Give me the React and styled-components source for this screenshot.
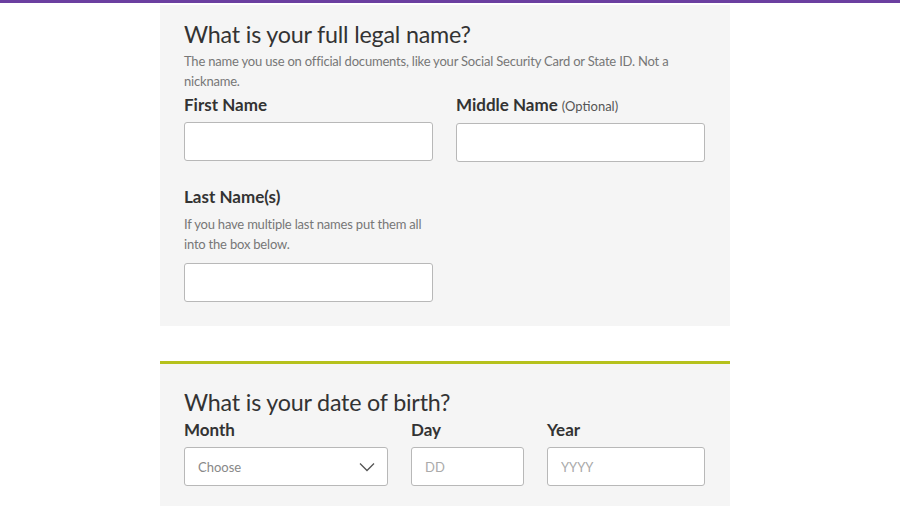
import styled, { createGlobalStyle } from "styled-components";

const Global = createGlobalStyle`
  html, body {
    margin: 0;
    padding: 0;
    background: #ffffff;
  }
  body {
    font-family: "Lato", "Liberation Sans", sans-serif;
    color: #333333;
  }
`;

const Page = styled.div`
  min-height: 506px;
  border-top: 3px solid #6b3fa0;
  padding-right: 10px;
  display: flex;
  flex-direction: column;
  align-items: center;
`;

const Section = styled.section`
  width: 570px;
  box-sizing: border-box;
  background: #f5f5f5;
  padding: ${(p) => (p.$accent ? "22px 25px 20px 24px" : "13px 25px 24px 24px")};
  border-top: ${(p) => (p.$accent ? "3px solid #b5c11c" : "none")};
  margin-top: ${(p) => (p.$accent ? "35px" : "2px")};
  display: flex;
  flex-direction: column;
`;

const Heading = styled.h2`
  margin: 0;
  font-size: 23.3px;
  line-height: 32px;
  font-weight: 400;
  color: #333333;
  letter-spacing: -0.2px;
`;

const Hint = styled.p`
  margin: ${(p) => p.$margin || "0"};
  font-size: 13px;
  line-height: 20px;
  color: #777777;
  letter-spacing: -0.2px;
`;

const Row = styled.div`
  display: grid;
  grid-template-columns: ${(p) => p.$cols};
  column-gap: 23px;
  margin-top: ${(p) => p.$mt || "0"};
`;

const Field = styled.div`
  display: flex;
  flex-direction: column;
`;

const Label = styled.label`
  font-size: 17px;
  line-height: 24px;
  font-weight: 700;
  color: #333333;
  margin-bottom: 5px;
`;

const Optional = styled.span`
  font-size: 13px;
  font-weight: 400;
  color: #555555;
  margin-left: 4px;
`;

const Input = styled.input`
  box-sizing: border-box;
  width: 100%;
  height: 39px;
  border: 1px solid #b8b8b8;
  border-radius: 3px;
  background: #ffffff;
  padding: 0 13px;
  font-family: "Lato", "Liberation Sans", sans-serif;
  font-size: 13px;
  color: #333333;

  &::placeholder {
    color: #aaaaaa;
  }
`;

const SelectBox = styled.div`
  box-sizing: border-box;
  height: 39px;
  border: 1px solid #b8b8b8;
  border-radius: 3px;
  background: #ffffff;
  padding: 0 12px 0 13px;
  display: flex;
  align-items: center;
  justify-content: space-between;
  font-size: 13px;
  color: #888888;
`;

const Chevron = () => (
  <svg width="16" height="10" viewBox="0 0 16 10" aria-hidden="true">
    <path d="M1 1.5 L8 8.5 L15 1.5" fill="none" stroke="#555" strokeWidth="1.3" />
  </svg>
);

export default function App() {
  return (
    <>
      <Global />
      <Page>
        <Section>
          <Heading>What is your full legal name?</Heading>
          <Hint $margin="1px 0 0">
            The name you use on official documents, like your Social Security Card or State ID. Not a
            nickname.
          </Hint>
          <Row $cols="1fr 1fr" $mt="2px">
            <Field>
              <Label>First Name</Label>
              <Input type="text" />
            </Field>
            <Field>
              <Label>
                Middle Name<Optional>(Optional)</Optional>
              </Label>
              <Input type="text" />
            </Field>
          </Row>
          <Row $cols="1fr 1fr" $mt="23px">
            <Field>
              <Label>Last Name(s)</Label>
              <Hint $margin="0 0 9px">
                If you have multiple last names put them all into the box below.
              </Hint>
              <Input type="text" />
            </Field>
          </Row>
        </Section>

        <Section $accent>
          <Heading>What is your date of birth?</Heading>
          <Row $cols="204px 113px 1fr">
            <Field>
              <Label>Month</Label>
              <SelectBox>
                Choose
                <Chevron />
              </SelectBox>
            </Field>
            <Field>
              <Label>Day</Label>
              <Input type="text" placeholder="DD" />
            </Field>
            <Field>
              <Label>Year</Label>
              <Input type="text" placeholder="YYYY" />
            </Field>
          </Row>
        </Section>
      </Page>
    </>
  );
}
